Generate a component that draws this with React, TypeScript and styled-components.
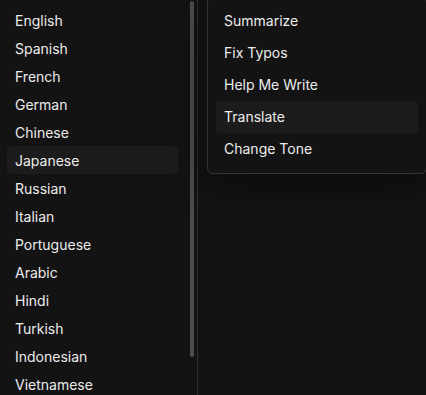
import React from "react";
import styled, { createGlobalStyle } from "styled-components";

const Global = createGlobalStyle`
  html, body { margin: 0; padding: 0; background: #131313; }
  body { font-family: Inter, "Noto Sans", sans-serif; overflow: hidden; }
  * { box-sizing: border-box; }
`;

const Page = styled.div`
  position: relative;
  width: 426px;
  height: 395px;
  background: #131313;
  display: flex;
  overflow: hidden;
`;

const LangPanel = styled.div`
  position: relative;
  width: 198px;
  height: 395px;
  border-right: 1px solid #2e2e2e;
  overflow: hidden;
`;

const LangList = styled.ul`
  list-style: none;
  margin: 0;
  padding: 6px 19px 0 7px;
  display: flex;
  flex-direction: column;
`;

const LangItem = styled.li<{ $active?: boolean }>`
  height: 28px;
  display: flex;
  align-items: center;
  padding-left: 8px;
  border-radius: 4px;
  font-size: 14px;
  color: #ececec;
  background: ${(p) => (p.$active ? "#1c1c1c" : "transparent")};
`;

const ScrollThumb = styled.div`
  position: absolute;
  left: 190px;
  top: 1px;
  width: 4px;
  height: 356px;
  border-radius: 2px;
  background: #4d4d4d;
`;

const Menu = styled.div`
  position: absolute;
  left: 207px;
  top: -4px;
  width: 220px;
  padding: 8px 8px 8px;
  border: 1px solid #333;
  border-radius: 6px;
  background: #131313;
  box-shadow: 0 12px 40px rgba(0, 0, 0, 0.45);
  display: flex;
  flex-direction: column;
`;

const MenuItem = styled.div<{ $active?: boolean }>`
  height: 32px;
  display: flex;
  align-items: center;
  padding-left: 8px;
  padding-bottom: 1px;
  border-radius: 4px;
  font-size: 14px;
  color: #ececec;
  background: ${(p) => (p.$active ? "#1c1c1c" : "transparent")};
`;

const languages = [
  "English",
  "Spanish",
  "French",
  "German",
  "Chinese",
  "Japanese",
  "Russian",
  "Italian",
  "Portuguese",
  "Arabic",
  "Hindi",
  "Turkish",
  "Indonesian",
  "Vietnamese",
];

const actions = ["Summarize", "Fix Typos", "Help Me Write", "Translate", "Change Tone"];

export default function App() {
  return (
    <>
      <Global />
      <Page>
        <LangPanel>
          <LangList>
            {languages.map((l) => (
              <LangItem key={l} $active={l === "Japanese"}>
                {l}
              </LangItem>
            ))}
          </LangList>
          <ScrollThumb />
        </LangPanel>
        <Menu>
          {actions.map((a) => (
            <MenuItem key={a} $active={a === "Translate"}>
              {a}
            </MenuItem>
          ))}
        </Menu>
      </Page>
    </>
  );
}
